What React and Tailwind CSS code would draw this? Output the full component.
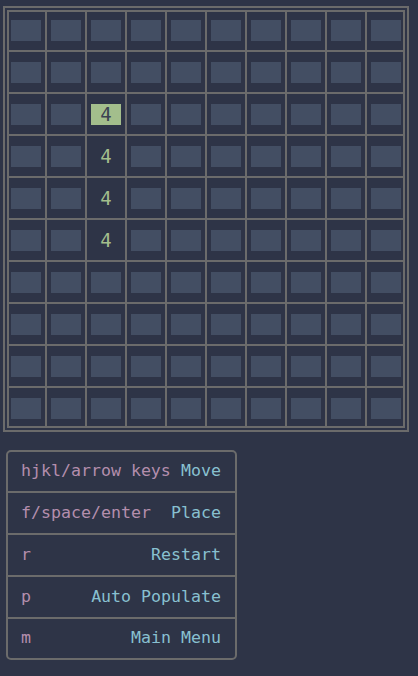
const SIZE = 10;

// placed ships: row, col -> value
const placed = { "2-2": 4, "3-2": 4, "4-2": 4, "5-2": 4 };
const cursor = "2-2";

const keys = [
  { key: "hjkl/arrow keys", action: "Move" },
  { key: "f/space/enter", action: "Place" },
  { key: "r", action: "Restart" },
  { key: "p", action: "Auto Populate" },
  { key: "m", action: "Main Menu" },
];

function Cell({ r, c }) {
  const id = r + "-" + c;
  const val = placed[id];
  const isCursor = id === cursor;
  const padL = c === 0 ? "pl-[2px]" : "pl-[4px]";
  const padT = r === 0 ? "pt-[8px]" : "pt-[10px]";

  let block = "bg-[#434e63]";
  if (isCursor) {
    block = "bg-[#a3be8c] text-[#3b4252]";
  } else if (val) {
    block = "text-[#a3be8c]";
  }

  return (
    <div className={"bg-[#2e3447] " + padL + " " + padT}>
      <div className={"w-[30px] h-[21px] flex items-center justify-center text-[19px] leading-none " + block}>
        {val ? val : ""}
      </div>
    </div>
  );
}

export default function App() {
  const rows = [];
  for (let r = 0; r < SIZE; r++) {
    for (let c = 0; c < SIZE; c++) {
      rows.push(<Cell key={r + "-" + c} r={r} c={c} />);
    }
  }

  return (
    <div
      className="w-[418px] h-[676px] bg-[#2e3447] pt-[6px] overflow-hidden"
      style={{ fontFamily: '"DejaVu Sans Mono", "Liberation Mono", monospace' }}
    >
      <div className="ml-[3px] w-[406px] border-2 border-[#6b6b6b] p-[2px]">
        <div className="border-2 border-[#6b6b6b]">
          <div className="grid grid-cols-[36px_repeat(8,38px)_36px] grid-rows-[38px_repeat(8,40px)_38px] gap-[2px] bg-[#6b6b6b]">
            {rows}
          </div>
        </div>
      </div>

      <div className="ml-[6px] mt-[18px] w-[231px] border-2 border-[#6b6b6b] rounded-[5px] flex flex-col text-[16.6px]">
        {keys.map((k, i) => (
          <div
            key={k.key}
            className={
              "flex items-center justify-between pl-[13px] pr-[14px] " +
              (i === 0 ? "h-[39px]" : i === keys.length - 1 ? "h-[41px] border-t-2 border-[#6b6b6b]" : "h-[42px] border-t-2 border-[#6b6b6b]")
            }
          >
            <span className="text-[#b48ead] whitespace-pre">{k.key}</span>
            <span className="text-[#88c0d0] whitespace-pre">{k.action}</span>
          </div>
        ))}
      </div>
    </div>
  );
}
